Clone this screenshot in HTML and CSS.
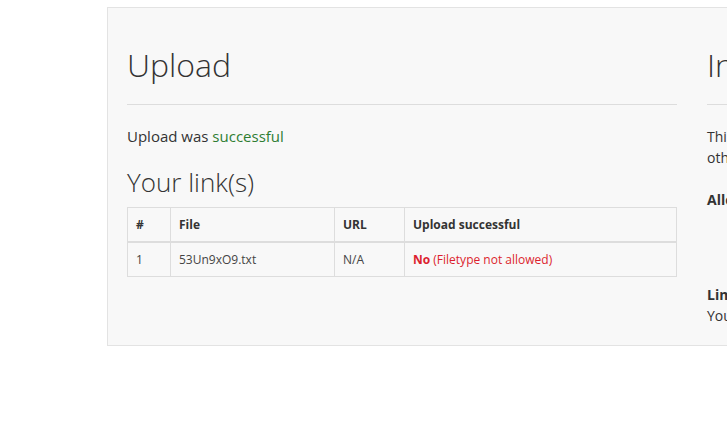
FILE: index.html
```html
<!DOCTYPE html>
<html lang="en">
<head>
<meta charset="utf-8">
<title>Upload</title>
<link rel="stylesheet" href="styles.css">
</head>
<body>
<div class="panel">
  <div class="col">
    <h1 class="title">Upload</h1>
    <p class="status">Upload was <span class="ok">successful</span></p>
    <h2 class="sub">Your link(s)</h2>
    <table class="links">
      <thead>
        <tr><th class="c-num">#</th><th class="c-file">File</th><th class="c-url">URL</th><th>Upload successful</th></tr>
      </thead>
      <tbody>
        <tr><td>1</td><td>53Un9xO9.txt</td><td>N/A</td><td><strong class="bad">No</strong> <span class="reason">(Filetype not allowed)</span></td></tr>
      </tbody>
    </table>
  </div>
  <div class="col">
    <h1 class="title">Info</h1>
    <p class="info">This is a simple file hosting service to share your files with<br>others via a short link.</p>
    <p class="label">Allowed filetypes</p>
    <ul class="types">
      <li>Images (jpg, png, gif)</li>
      <li>Archives (zip, 7z)</li>
      <li>Documents (pdf)</li>
    </ul>
    <p class="label tight">Limits</p>
    <p class="info">You can upload up to 10 files at once, 20 MB each.</p>
  </div>
</div>
</body>
</html>
```

FILE: styles.css
```css
html, body {
  margin: 0;
  padding: 0;
  background: #fff;
  overflow: hidden;
}
body {
  font-family: "Open Sans", "Liberation Sans", sans-serif;
  font-size: 14px;
  line-height: 21px;
  color: #333;
}
.panel {
  margin: 7px 0 0 107px;
  width: 1170px;
  box-sizing: border-box;
  background: #f8f8f8;
  border: 1px solid #e3e3e3;
  padding: 0 19px 19px;
  display: flex;
  gap: 30px;
}
.col {
  width: 550px;
  flex: none;
}
.title {
  font-size: 32px;
  font-weight: 300;
  line-height: 35px;
  margin: 39px 0 21px;
  padding-bottom: 22px;
  border-bottom: 1px solid #ddd;
}
.status {
  margin: 0;
  font-size: 15px;
}
.ok {
  color: #2e7d32;
}
.sub {
  font-size: 26px;
  font-weight: 300;
  line-height: 30px;
  margin: 20px 0 10px;
}
.links {
  width: 100%;
  border-collapse: collapse;
  font-size: 12px;
  line-height: 17px;
}
.links th, .links td {
  border: 1px solid #ddd;
  padding: 8px 8px;
  text-align: left;
}
.links th {
  font-weight: 700;
  border-bottom: 2px solid #ddd;
}
.links td {
  color: #444;
}
.c-num { width: 26px; }
.c-file { width: 147px; }
.c-url { width: 53px; }
.bad {
  color: #dc1f2e;
}
.reason {
  color: #dc1f2e;
}
.info {
  margin: 0;
}
.label {
  font-weight: 700;
  margin: 21px 0 0;
}
.label.tight {
  margin-top: 11px;
}
.types {
  margin: 0;
  padding-left: 40px;
}
```
